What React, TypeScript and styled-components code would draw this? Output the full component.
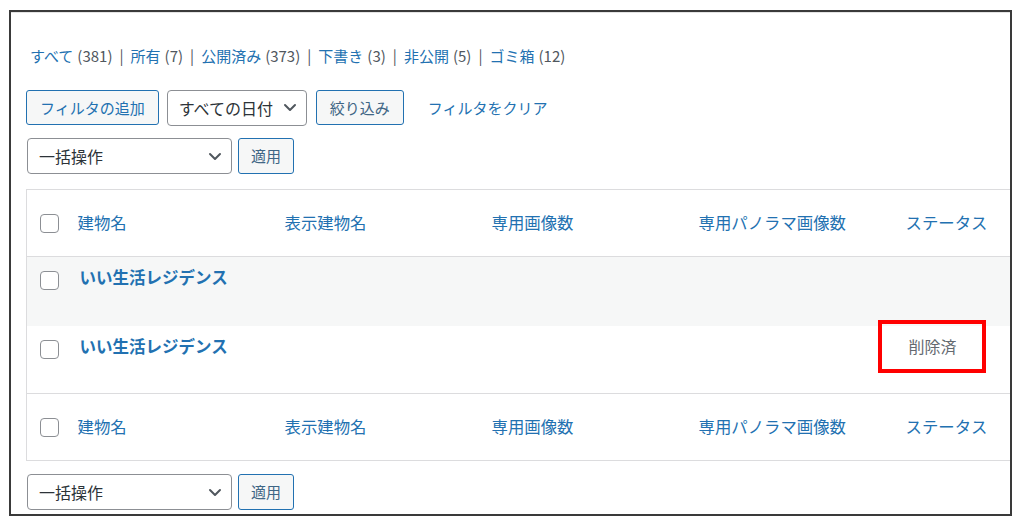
import React from "react";
import styled, { createGlobalStyle } from "styled-components";

const GlobalStyle = createGlobalStyle`
  html, body { margin: 0; padding: 0; background: #ffffff; }
  body {
    font-family: "Noto Sans CJK JP", "Noto Sans", sans-serif;
    color: #3c434a;
  }
  * { box-sizing: border-box; }
`;

const Page = styled.div`
  width: 1024px;
  height: 528px;
  padding: 10px 12px 12px 9px;
`;

const Frame = styled.div`
  height: 506px;
  border: 2px solid #3a3a3a;
  box-shadow: inset 0 1px 0 #e4e4e4;
  background: #ffffff;
  overflow: hidden;
  padding: 0 0 0 15px;
`;

const SubNav = styled.ul`
  list-style: none;
  margin: 34px 0 0 4px;
  padding: 0;
  display: flex;
  align-items: center;
  height: 20px;
  font-size: 15px;
  line-height: 20px;
  white-space: nowrap;
`;

const SubItem = styled.li`
  display: flex;
  align-items: center;
`;

const SubLink = styled.a`
  color: #2271b1;
  text-decoration: none;
`;

const Count = styled.span`
  color: #50575e;
  margin-left: 4px;
`;

const Sep = styled.span`
  color: #50575e;
  margin: 0 7px;
`;

const FilterBar = styled.div`
  display: flex;
  align-items: center;
  margin-top: 24px;
  height: 35px;
`;

const Button = styled.button<{ $muted?: boolean; $w?: number }>`
  height: ${(p) => (p.$w ? 36 : 35)}px;
  padding: 0 13px;
  ${(p) => (p.$w ? `width: ${p.$w}px;` : "")}
  border: 1px solid #2271b1;
  border-radius: 3px;
  background: #f6f7f7;
  color: ${(p) => (p.$muted ? "#3f6685" : "#2271b1")};
  font-family: inherit;
  font-size: 15px;
  line-height: 20px;
  white-space: nowrap;
  display: inline-flex;
  align-items: center;
  justify-content: center;
`;

const Select = styled.div<{ $w: number }>`
  width: ${(p) => p.$w}px;
  height: 36px;
  border: 1px solid #8c8f94;
  border-radius: 4px;
  background: #ffffff;
  color: #2c3338;
  font-size: 16px;
  line-height: 20px;
  display: flex;
  align-items: center;
  justify-content: space-between;
  padding: 0 9px 0 11px;
  white-space: nowrap;
`;

const ClearLink = styled.a`
  color: #2271b1;
  font-size: 15px;
  line-height: 20px;
  text-decoration: none;
  margin-left: 24px;
  white-space: nowrap;
`;

const BulkBar = styled.div<{ $top: number }>`
  display: flex;
  align-items: center;
  gap: 6px;
  margin-top: ${(p) => p.$top}px;
  margin-left: 1px;
`;

const Gap = styled.span<{ $w: number }>`
  display: inline-block;
  width: ${(p) => p.$w}px;
`;

const Table = styled.table`
  margin-top: 15px;
  width: 1100px;
  table-layout: fixed;
  border-collapse: collapse;
  border: 1px solid #dcdcde;
  background: #ffffff;
`;

const HeadCell = styled.th<{ $foot?: boolean }>`
  height: 67px;
  padding: 0 9px 3px;
  text-align: left;
  vertical-align: middle;
  font-weight: 400;
  font-size: 16.4px;
  line-height: 20px;
  color: #2271b1;
  white-space: nowrap;
  ${(p) =>
    p.$foot
      ? "border-top: 1px solid #dcdcde;"
      : "border-bottom: 1px solid #dcdcde;"}
`;

const CheckCell = styled.td<{ $pt: number }>`
  padding: ${(p) => p.$pt}px 0 0 13px;
  vertical-align: top;
`;

const HeadCheckCell = styled.th<{ $foot?: boolean }>`
  padding: 0 0 0 13px;
  vertical-align: middle;
  ${(p) =>
    p.$foot
      ? "border-top: 1px solid #dcdcde;"
      : "border-bottom: 1px solid #dcdcde;"}
`;

const Row = styled.tr<{ $alt?: boolean; $h: number }>`
  background: ${(p) => (p.$alt ? "#f6f7f7" : "#ffffff")};
  height: ${(p) => p.$h}px;
`;

const Cell = styled.td`
  padding: 10px 9px 0;
  vertical-align: top;
  font-size: 16px;
  line-height: 20px;
  white-space: nowrap;
`;

const StatusCell = styled(Cell)`
  position: relative;
  color: #646970;
  padding-left: 12px;
`;

const Highlight = styled.span`
  position: absolute;
  left: -19px;
  top: -6px;
  width: 108px;
  height: 53px;
  border: 4px solid #ff0000;
`;

const Title = styled.a`
  color: #2271b1;
  font-weight: 700;
  font-size: 16.5px;
  text-decoration: none;
  margin-left: 2px;
`;

const Check = styled.span`
  display: block;
  width: 19px;
  height: 19px;
  border: 1px solid #8c8f94;
  border-radius: 4px;
  background: #ffffff;
`;

const Chevron = () => (
  <svg width="14" height="9" viewBox="0 0 14 9" aria-hidden="true">
    <polyline
      points="2,2 7,7 12,2"
      fill="none"
      stroke="#50575e"
      strokeWidth="2"
      strokeLinecap="round"
      strokeLinejoin="round"
    />
  </svg>
);

const views = [
  { label: "すべて", count: 381 },
  { label: "所有", count: 7 },
  { label: "公開済み", count: 373 },
  { label: "下書き", count: 3 },
  { label: "非公開", count: 5 },
  { label: "ゴミ箱", count: 12 },
];

const columns = ["建物名", "表示建物名", "専用画像数", "専用パノラマ画像数", "ステータス"];

const HeaderRow = ({ foot }: { foot?: boolean }) => (
  <tr>
    <HeadCheckCell $foot={foot}>
      <Check />
    </HeadCheckCell>
    {columns.map((c) => (
      <HeadCell key={c} $foot={foot}>
        {c}
      </HeadCell>
    ))}
  </tr>
);

const BulkActions = ({ top }: { top: number }) => (
  <BulkBar $top={top}>
    <Select $w={205}>
      一括操作
      <Chevron />
    </Select>
    <Button $muted $w={56}>
      適用
    </Button>
  </BulkBar>
);

export default function App() {
  return (
    <>
      <GlobalStyle />
      <Page>
        <Frame>
          <SubNav>
            {views.map((v, i) => (
              <SubItem key={v.label}>
                <SubLink href="#">{v.label}</SubLink>
                <Count>({v.count})</Count>
                {i < views.length - 1 && <Sep>|</Sep>}
              </SubItem>
            ))}
          </SubNav>

          <FilterBar>
            <Button>フィルタの追加</Button>
            <Gap $w={8} />
            <Select $w={140}>
              すべての日付
              <Chevron />
            </Select>
            <Gap $w={9} />
            <Button $muted>絞り込み</Button>
            <ClearLink href="#">フィルタをクリア</ClearLink>
          </FilterBar>

          <BulkActions top={13} />

          <Table>
            <colgroup>
              <col style={{ width: 42 }} />
              <col style={{ width: 207 }} />
              <col style={{ width: 207 }} />
              <col style={{ width: 207 }} />
              <col style={{ width: 207 }} />
              <col style={{ width: 230 }} />
            </colgroup>
            <thead>
              <HeaderRow />
            </thead>
            <tbody>
              <Row $alt $h={69}>
                <CheckCell $pt={14}>
                  <Check />
                </CheckCell>
                <Cell>
                  <Title href="#">いい生活レジデンス</Title>
                </Cell>
                <Cell />
                <Cell />
                <Cell />
                <Cell />
              </Row>
              <Row $h={68}>
                <CheckCell $pt={14}>
                  <Check />
                </CheckCell>
                <Cell>
                  <Title href="#">いい生活レジデンス</Title>
                </Cell>
                <Cell />
                <Cell />
                <Cell />
                <StatusCell>
                  削除済
                  <Highlight />
                </StatusCell>
              </Row>
            </tbody>
            <tfoot>
              <HeaderRow foot />
            </tfoot>
          </Table>

          <BulkActions top={13} />
        </Frame>
      </Page>
    </>
  );
}
